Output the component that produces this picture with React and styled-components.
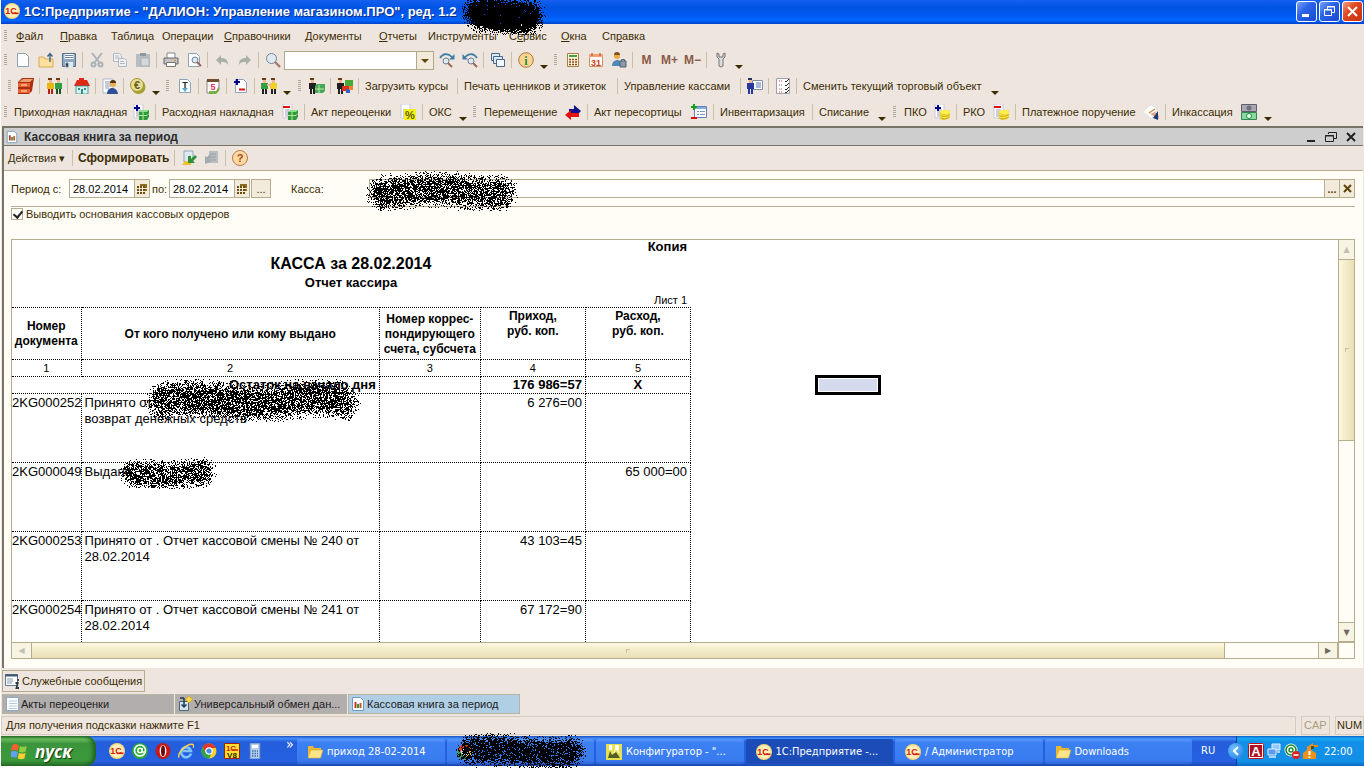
import { Fragment } from "react";
import styled, { createGlobalStyle, css } from "styled-components";

const ui = `"Liberation Sans", Arial, sans-serif`;
const shell = `"DejaVu Sans Condensed", "Noto Sans", sans-serif`;

const GlobalStyle = createGlobalStyle`
  * {
    box-sizing: border-box;
  }
  body {
    margin: 0;
    background: #fff;
    font-family: ${ui};
    font-size: 11px;
    color: #3c2c04;
  }
  button, input, select {
    font: inherit;
    color: inherit;
    margin: 0;
    padding: 0;
    border: 0;
    border-radius: 0;
    background: none;
  }
  svg {
    display: block;
    flex: none;
  }
`;

/* ---------- icons ---------- */

const Letter = ({ x = 8, y, size, fill, children, font = "Liberation Sans" }) => (
  <text x={x} y={y} fontSize={size} fill={fill} fontFamily={font} fontWeight="bold" textAnchor="middle">
    {children}
  </text>
);

const page = <path d="M2.5 1.5h8l3 3v10h-11z" fill="#fff" stroke="#8fa3b8" />;
const redPage = (
  <>
    <path d="M1 0h9v14H1z" fill="#fff" stroke="#c8c8d8" />
    <path d="M3 6h5M3 8h5M3 10h5M3 12h5" stroke="#9aa0b8" />
  </>
);
const plus = <path d="M4 1v6M1 4h6" stroke="#00008c" strokeWidth="2" />;
const minus = <path d="M1 3h7" stroke="#e01010" strokeWidth="2" />;
const box = (
  <>
    <path d="M6 8l3-2h7v7l-2 3H6z" fill="#2e9a3c" />
    <path d="M6 8l3-2h7l-2 2z" fill="#8ce08c" />
    <path d="M10 8v8M6 11.5h8l2-2" stroke="#b9e8a0" fill="none" />
  </>
);
const coins = (
  <>
    <path d="M6 9c0-2 5-4 10-2v6c-1 3-9 4-10 1z" fill="#d8b800" />
    <path d="M6 10c3 2 7 1 10-1M6 12.500c3 2 7 1 10-1" stroke="#fff27a" fill="none" />
    <ellipse cx="11" cy="8" rx="5" ry="2" fill="#fff04a" />
  </>
);
const person = (x, shirt, legs = "#222", hair = "#6a3a10") => (
  <g transform={`translate(${x} 0)`}>
    <path d="M2 1h3v4H2z" fill="#f0b890" />
    <path d="M1 0h4v2H1z" fill={hair} />
    <path d="M0 5h7v6H0z" fill={shirt} />
    <path d="M1 11h2v5H1zM4 11h2v5H4z" fill={legs} />
  </g>
);
const lens = (x, y) => (
  <>
    <circle cx={x} cy={y} r="3" fill="#dfe9f2" stroke="#6d8095" />
    <path d={`M${x + 2} ${y + 2}l4 4`} stroke="#9a6858" strokeWidth="2" />
  </>
);

const icons = {
  oneC: (
    <>
      <circle cx="8" cy="8" r="8" fill="#f8d878" />
      <circle cx="8" cy="8" r="6.800" fill="#fff0b8" />
      <Letter x={7} y={11} size={9} fill="#d8200c">
        1С
      </Letter>
      <path d="M8 10.300h6.500" stroke="#d8200c" strokeWidth="1.600" />
    </>
  ),
  blank: page,
  open: (
    <>
      <path d="M1 5h5l1 2h8v8H1z" fill="#fbe0a0" stroke="#d9a850" />
      <path d="M12 10V2M9.500 4.500 12 1.500l2.500 3" fill="none" stroke="#3f6486" strokeWidth="1.400" />
    </>
  ),
  save: (
    <>
      <path d="M1.500 1.500h13v13h-13z" fill="#8faabf" stroke="#55718c" />
      <path d="M3.500 2h9v5h-9z" fill="#fff" />
      <path d="M4 10h8v5H4z" fill="#dfe8ef" />
      <path d="M5 11h2v4H5zM4 3.500h8M4 5.500h8" stroke="#6c88a2" />
    </>
  ),
  cut: (
    <g fill="none" stroke="#a9b2b8" strokeWidth="2">
      <path d="M3 1l7 9M13 1L6 10" />
      <circle cx="4.500" cy="12.500" r="2" />
      <circle cx="11.500" cy="12.500" r="2" />
    </g>
  ),
  copy: (
    <g fill="#eef0f2" stroke="#b0b9c2">
      <path d="M1.500 1.500h6l2 2v6h-8z" />
      <path d="M6.500 6.500h6l2 2v6h-8z" />
      <path d="M3 4h4M3 6h4M8 9.500h4M8 11.500h5" />
    </g>
  ),
  paste: (
    <>
      <path d="M1 2h14v13H1z" fill="#b5bcc2" />
      <path d="M5 1h6v3H5z" fill="#8d979f" />
      <path d="M6 6h8v8H6z" fill="#d4d8db" stroke="#aab2b8" />
    </>
  ),
  print: (
    <>
      <path d="M4 1h8v6H4z" fill="#fff" stroke="#888" />
      <path d="M1 6h14v6H1z" fill="#c4c4c4" stroke="#666" />
      <path d="M3.500 10.500h9v4h-9z" fill="#fff" stroke="#777" />
      <path d="M11 8.500h2" stroke="#e08020" />
    </>
  ),
  preview: (
    <>
      {page}
      {lens(9, 8)}
    </>
  ),
  undo: <path d="M2 8l5-5v3c5 0 7 2 7 7-2-3-3-3-7-3v3z" fill="#a9b0a6" />,
  redo: <path d="M14 8L9 3v3c-5 0-7 2-7 7 2-3 3-3 7-3v3z" fill="#a9b0a6" />,
  find: (
    <>
      <circle cx="6.500" cy="6.500" r="5" fill="#dfe9f2" stroke="#71859b" />
      <path d="M10 10l5 5" stroke="#a8786a" strokeWidth="2.400" />
    </>
  ),
  findNext: (
    <>
      <path d="M1 6c3-5 8-5 12-1" fill="none" stroke="#3b7ea8" strokeWidth="1.600" />
      <path d="M15.500 2v5.500H10z" fill="#3b7ea8" />
      {lens(7, 9)}
    </>
  ),
  findPrev: (
    <>
      <path d="M15 6C12 1 7 1 3 5" fill="none" stroke="#3b7ea8" strokeWidth="1.600" />
      <path d="M.5 2v5.500H6z" fill="#3b7ea8" />
      {lens(9, 9)}
    </>
  ),
  windows: (
    <g fill="#dce8f4" stroke="#49698a">
      <path d="M1.500 1.500h8v7h-8z" />
      <path d="M3.500 4.500h9v7h-9z" />
      <path d="M6.500 7.500h8v7h-8z" fill="#f4f8fc" />
    </g>
  ),
  info: (
    <>
      <circle cx="8" cy="8" r="7.300" fill="#fbd692" stroke="#a8783c" />
      <Letter y={12.5} size={12} fill="#2c8a3c" font="Liberation Serif">
        i
      </Letter>
    </>
  ),
  calc: (
    <>
      <path d="M2.500 1.500h11v13h-11z" fill="#fff6d8" stroke="#a5824a" />
      <path d="M4 4h8" stroke="#45a045" strokeWidth="2" />
      <path d="M4 7.500h8M4 10h8M4 12.500h8" stroke="#8a4820" strokeWidth="1.500" strokeDasharray="2 1" />
    </>
  ),
  calendar: (
    <>
      <path d="M1.500 2.500h13v12h-13z" fill="#fff" stroke="#d29460" />
      <path d="M1 2h14v3H1z" fill="#f4a070" />
      <path d="M4 1v3M12 1v3" stroke="#a85020" />
      <Letter y={13.5} size={9} fill="#d04020">
        31
      </Letter>
    </>
  ),
  user: (
    <>
      <circle cx="6" cy="4" r="3" fill="#f0a840" />
      <path d="M3 3a3 3 0 0 1 6 0z" fill="#805020" />
      <path d="M1 14c0-7 9-8 10-2v2z" fill="#4f8ab8" />
      <path d="M9 9h6v6H9z" fill="#8d9cac" stroke="#4f5f70" />
      <path d="M10.500 9V7.500h3V9" fill="none" stroke="#4f5f70" />
    </>
  ),
  wrench: <path d="M4 1v4l2 2v7q2 2 4 0V7l2-2V1l-2 1v3H6V2z" fill="#dcdcdc" stroke="#747474" />,
  drawers: (
    <>
      <path d="M0 4l4-4h12l-2 13-3 3H0z" fill="#a83010" />
      <path d="M1 4l4-3h10l-3 3z" fill="#f0a070" />
      <path d="M0 5h12v4H0zM0 11h12v4H0z" fill="#e86030" />
      <path d="M3 7h6M3 13h6" stroke="#fff0c0" />
    </>
  ),
  people: (
    <>
      {person(1, "#e8b810", "#b82010")}
      {person(9, "#30a040", "#205028")}
    </>
  ),
  house: (
    <>
      <path d="M5 0h5v3H5z" fill="#e02818" />
      <path d="M0 8l3-6h10l3 6z" fill="#e02818" />
      <path d="M2 8h12v8H2z" fill="#d8f0f0" stroke="#309080" strokeWidth=".8" />
      <path d="M4 10h2v2H4zM10 10h2v2h-2zM7 11h2v5H7z" fill="#309080" />
    </>
  ),
  clerk: (
    <>
      <path d="M1 1h10v14H1z" fill="#fff" stroke="#b0b8c8" />
      <path d="M3 4h6M3 6h6M3 8h6M3 10h4" stroke="#8898b0" />
      <circle cx="11" cy="6" r="3" fill="#e8b050" />
      <path d="M8 5a3 3 0 0 1 6 0z" fill="#583010" />
      <path d="M5 16c0-8 10-8 11 0z" fill="#2f4f98" />
    </>
  ),
  euro: (
    <>
      <circle cx="8.500" cy="9" r="7" fill="#a8a030" />
      <circle cx="7" cy="7" r="6.500" fill="#e4dc98" stroke="#a09830" />
      <Letter x={7} y={11} size={11} fill="#686010">
        €
      </Letter>
    </>
  ),
  pageT: (
    <>
      {page}
      <path d="M5 10h6l-3 4z" fill="#5aa8d0" />
      <Letter y={10} size={9} fill="#222">
        T
      </Letter>
    </>
  ),
  page5: (
    <>
      <path d="M2 2h12v10l-3 3H2z" fill="#fff" stroke="#888" />
      <path d="M2 1h12v3H2z" fill="#705030" />
      <path d="M4 13h7l3-5v5l-3 3H4z" fill="#78b048" />
      <Letter y={12} size={9} fill="#e03060">
        5
      </Letter>
    </>
  ),
  plusMinus: (
    <>
      {page}
      {plus}
      <path d="M6 11.500h6" stroke="#e01010" strokeWidth="2" />
    </>
  ),
  handshake: (
    <>
      {person(0, "#30a040")}
      {person(9, "#f0d020")}
      <path d="M6 7h5" stroke="#f0b890" strokeWidth="2" />
    </>
  ),
  manBox: (
    <>
      {person(0, "#202020")}
      <path d="M6 8l2-2h8v7l-2 2H6z" fill="#48a858" />
      <path d="M10 7v8M6 11h9" stroke="#b8e8a0" />
    </>
  ),
  manCubes: (
    <>
      {person(0, "#202020")}
      <path d="M8 2h8v7H8z" fill="#48a838" />
      <path d="M5 8h7v5H5z" fill="#e03020" />
      <path d="M9 11h4v4H9z" fill="#3060d0" />
      <path d="M12 8h4v4h-4z" fill="#f08030" />
    </>
  ),
  idCard: (
    <>
      <path d="M5.500 2.500h10v9h-10z" fill="#fff" stroke="#8090a8" />
      <path d="M9 5h5M9 7h5M9 9h5" stroke="#5878b0" />
      {person(0, "#2838a0", "#2838a0", "#283060")}
    </>
  ),
  checklist: (
    <>
      <path d="M1.500.500h13v15h-13z" fill="#fff" stroke="#a0a0a8" />
      <path d="M4 3h4M4 7h4M4 11h4M4 14h4" stroke="#d04040" strokeDasharray="1 1" />
      <path d="M10 3l1 1 3-3M10 7l1 1 3-3M10 11l1 1 3-3M10 14l1 1 3-3" fill="none" stroke="#222" />
    </>
  ),
  boxPlus: (
    <>
      {redPage}
      {plus}
      {box}
    </>
  ),
  boxMinus: (
    <>
      {redPage}
      {minus}
      {box}
    </>
  ),
  percent: (
    <>
      {redPage}
      <path d="M4 5h12v11H4z" fill="#f4f020" />
      <Letter x={10} y={14.5} size={11} fill="#606000">
        %
      </Letter>
    </>
  ),
  arrows: (
    <>
      <path d="M4 5h5V1l7 6-4 4V9H4z" fill="#10108c" />
      <path d="M0 11l6-5v3h8v4H6v3z" fill="#e81010" />
    </>
  ),
  resort: (
    <>
      <path d="M3.500 2.500h12v11h-12z" fill="#fff" stroke="#6080b8" />
      <path d="M4 4h11" stroke="#88a8e0" strokeWidth="2" />
      <path d="M6 7.500h2M9 7.500h5M6 10.500h2M9 10.500h5" stroke="#7898c0" />
      <path d="M3 0v6M0 3h6" stroke="#18a018" strokeWidth="2" />
      <path d="M0 14h6" stroke="#e01010" strokeWidth="2" />
    </>
  ),
  coinsPlus: (
    <>
      {redPage}
      {plus}
      {coins}
    </>
  ),
  coinsMinus: (
    <>
      {redPage}
      {minus}
      {coins}
    </>
  ),
  sign: (
    <>
      <path d="M0 8l7-7 7 3-5 11z" fill="#fff" stroke="#d8dce0" strokeWidth=".8" />
      <path d="M6 9l6-4" stroke="#d09040" strokeWidth="1.500" />
      <path d="M7 10l5-2 4 4v3z" fill="#e0a888" />
      <path d="M10 14l5-7v9z" fill="#203878" />
    </>
  ),
  cash: (
    <>
      <path d="M.5.500h15v7H.5z" fill="#a8a8b0" stroke="#60606c" />
      <circle cx="8" cy="4" r="2.500" fill="#70707c" />
      <path d="M.5 8.500h15v7H.5z" fill="#88d8a0" stroke="#308850" />
      <circle cx="8" cy="12" r="2.500" fill="#e0ffe8" stroke="#308850" />
    </>
  ),
  report: (
    <>
      <path d="M2.500 1.500h8l3 3v10h-11z" fill="#fff" stroke="#6f9ac0" />
      <path d="M5.500 6v6" stroke="#d03020" strokeWidth="2" />
      <path d="M8 8v4" stroke="#30a030" strokeWidth="2" />
      <path d="M10.500 7v5" stroke="#c05030" strokeWidth="2" />
    </>
  ),
  loadSet: (
    <>
      <path d="M3 1h9v11H3z" fill="#dfe9f2" stroke="#8fa8bc" />
      <path d="M1 15l3-4h6v4z" fill="#f0c030" />
      <path d="M14 5l-4 4V6H7v7h7l-2-2 4-4z" fill="#2f9038" />
    </>
  ),
  saveSet: (
    <>
      <path d="M5 1h9v12H5z" fill="#b9bec3" />
      <path d="M6 4h6M6 7h6M6 10h6" stroke="#989ea4" />
      <path d="M1 14V6l2 1 3-3 1 4-2 1 2 3z" fill="#a3aab0" />
    </>
  ),
  help: (
    <>
      <circle cx="8" cy="8" r="7.500" fill="#ffd9a0" stroke="#b87850" />
      <Letter y={12} size={11} fill="#a04820">
        ?
      </Letter>
    </>
  ),
  messages: (
    <>
      <path d="M.5 1.500h12v11H.5z" fill="#fff" stroke="#607890" />
      <path d="M0 2.500h13" stroke="#405870" strokeWidth="2" />
      <path d="M2 6h6M2 8h6M2 10h5" stroke="#8098b0" />
      <path d="M13 6v2M10.500 10h2.200l-1.200 5h2.500" fill="none" stroke="#303840" strokeWidth="1.800" />
    </>
  ),
  journal: (
    <>
      <path d="M2.500 1.500h12v13h-12z" fill="#fff" stroke="#8aa8c8" />
      <path d="M5 5h8M5 7.500h8M5 10h8M5 12.500h8" stroke="#b8c8d8" />
    </>
  ),
  exchange: (
    <>
      <path d="M2.500 5.500h9v9h-9z" fill="#d8e4ec" stroke="#48647c" />
      <path d="M7 2v9M4.500 8.500 7 11l2.500-2.500M3 2h4" fill="none" stroke="#203850" strokeWidth="1.500" />
      <path d="M12 0l3.500 3.500L12 7 8.500 3.500z" fill="#ffd840" stroke="#c89818" strokeWidth=".6" />
    </>
  ),
  folder: (
    <>
      <path d="M1 2h5l1 2h7v10H1z" fill="#e8b830" />
      <path d="M4 6h12l-2.500 8H1z" fill="#ffe58a" stroke="#d8a828" strokeWidth=".6" />
    </>
  ),
  flag: (
    <>
      <path d="M1 3c2-2 4-1 6 0L6 8C4 7 3 6.500 0 8z" fill="#f06030" />
      <path d="M8 3.500c2 1 4 1 6 0l-1 5c-2 1-4 1-6 0z" fill="#8ad040" />
      <path d="M0 9c2-1.500 4-1 6 0l-1 5c-2-1-4-1-6 0z" fill="#60a0f8" />
      <path d="M7 9.500c2 1 4 1 6 0l-1 5c-2 1-4 1-6 0z" fill="#ffd030" />
    </>
  ),
  agent: (
    <>
      <circle cx="8" cy="8" r="8" fill="#28a838" />
      <circle cx="8" cy="7.500" r="5.500" fill="none" stroke="#fff" strokeWidth="1.600" />
      <circle cx="8" cy="7.500" r="2.200" fill="none" stroke="#fff" strokeWidth="1.600" />
      <path d="M10.200 5v3.500q1 1.500 2.500 0" fill="none" stroke="#fff" strokeWidth="1.400" />
    </>
  ),
  opera: (
    <>
      <ellipse cx="8" cy="8" rx="7.500" ry="8" fill="#c81818" />
      <ellipse cx="8" cy="8" rx="3.400" ry="6" fill="#fff" />
      <ellipse cx="8" cy="8" rx="2" ry="5.400" fill="#700808" />
    </>
  ),
  ie: (
    <>
      <path d="M13 10.500A5 5 0 1 1 13 8H5" fill="none" stroke="#7cc4ff" strokeWidth="2.600" />
      <path d="M1 14.500C-1 10 9 0 15 1.500c1.500 1 0 3 0 3" fill="none" stroke="#ffd24a" strokeWidth="1.400" />
    </>
  ),
  chrome: (
    <>
      <circle cx="8" cy="8" r="7.500" fill="#f8d030" />
      <path d="M1.500 4.250A7.500 7.500 0 0 1 15 5H8L5 9.500z" fill="#e03828" />
      <path d="M1.500 4.250A7.500 7.500 0 0 0 8 15.500l3-6H5z" fill="#30a048" />
      <circle cx="8" cy="8" r="3.200" fill="#4888e8" stroke="#fff" strokeWidth="1.200" />
    </>
  ),
  v8: (
    <>
      <path d="M.5.500h15v15H.5z" fill="#f8e030" stroke="#a02010" />
      <path d="M8 7h6" stroke="#d82010" strokeWidth="1.500" />
      <Letter x={7} y={8} size={8} fill="#d82010">
        1С
      </Letter>
      <Letter y={15} size={8} fill="#302800">
        V8
      </Letter>
    </>
  ),
  pda: (
    <>
      <path d="M3 0h10v16H3z" fill="#b8d0f0" stroke="#5878b8" />
      <path d="M5 2h6v3H5z" fill="#fff" />
      <path d="M5 8h6M5 10.500h6M5 13h6" stroke="#4068a8" strokeWidth="1.300" strokeDasharray="1.500 1" />
    </>
  ),
  config: (
    <>
      <path d="M0 0h16v16H0z" fill="#e8e050" />
      <path d="M3 1h3v5H3zM9 1h4v5H9z" fill="#fff" />
      <path d="M2 14l2-7 2 4 4-3 4 6z" fill="#506028" />
      <path d="M8 9l2-5 3 5" fill="none" stroke="#fff" />
    </>
  ),
  avira: (
    <>
      <rect x=".5" y=".5" width="15" height="15" rx="1" fill="#fff" stroke="#c01020" />
      <path d="M2 2h12v12H2z" fill="#b01020" />
      <Letter y={13} size={13} fill="#fff">
        A
      </Letter>
    </>
  ),
  network: (
    <>
      <path d="M6 1h8v6H6z" fill="#90c8ff" stroke="#e0f0ff" />
      <path d="M2 6h8v6H2z" fill="#5898f0" stroke="#e0f0ff" />
      <path d="M3 14h7M11 9h3" stroke="#d8e8f8" strokeWidth="1.500" />
    </>
  ),
  agentOff: (
    <>
      <circle cx="7" cy="7" r="6.500" fill="#fff" />
      <circle cx="7" cy="7" r="5" fill="none" stroke="#188828" strokeWidth="1.600" />
      <circle cx="7" cy="7" r="2" fill="none" stroke="#188828" strokeWidth="1.400" />
      <circle cx="12" cy="12" r="4" fill="#e02020" />
      <path d="M9.500 12h5" stroke="#fff" strokeWidth="1.600" />
    </>
  ),
  guard: (
    <>
      <path d="M5 4l6-4v2h5v2H9v3l5 3v6H1v-6l4-3z" fill="#f09018" />
      <path d="M9 3h3v3H9z" fill="#405020" />
      <path d="M7.500 8v4M7.500 13.500V15" stroke="#fff" strokeWidth="2" />
    </>
  ),
};

const Icon = ({ name, size = 16 }) => (
  <svg width={size} height={size} viewBox="0 0 16 16" aria-hidden="true">
    {icons[name]}
  </svg>
);

/* ---------- ink spray over the private fields ---------- */

const Spray = styled.svg`
  position: absolute;
  left: ${(p) => p.$x}px;
  top: ${(p) => p.$y}px;
  pointer-events: none;
  z-index: 2;
`;

function Ink({ x, y, w, h, max = 0.72, gain = 1.25, seed = 7 }) {
  let s = seed;
  const rnd = () => {
    s = (s * 16807) % 2147483647;
    return s / 2147483647;
  };
  for (let i = 0; i < 20; i++) rnd();
  let d = "";
  for (let py = 0; py < h; py++) {
    for (let px = 0; px < w; px++) {
      const wave = Math.sin((px + seed * 9) / 19) * 0.12;
      const dy = Math.abs((py - h / 2) / (h / 2) + wave);
      const dx = Math.min(px, w - px) / (h / 2);
      const edge = dx < 1 ? 1 - dx : 0;
      const r = Math.sqrt(dy * dy + edge * edge);
      if (rnd() < Math.min(max, (1 - r) * gain)) d += `M${px} ${py}h1v1h-1z`;
    }
  }
  return (
    <Spray $x={x} $y={y} width={w} height={h} shapeRendering="crispEdges" aria-hidden="true">
      <path d={d} fill="#000" />
    </Spray>
  );
}

/* ---------- application frame ---------- */

const Desktop = styled.div`
  display: flex;
  flex-direction: column;
  height: 100vh;
  padding: 0 0 2px 1px;
  overflow: hidden;
`;

const Frame = styled.div`
  flex: 1;
  min-height: 0;
  display: flex;
  flex-direction: column;
  background: #eee6de;
`;

const TitleBar = styled.header`
  position: relative;
  display: flex;
  align-items: center;
  gap: 4px;
  height: 24px;
  flex: none;
  padding: 0 1px 2px 3px;
  background: linear-gradient(#1660f0, #0054e3 30%, #0058f0 60%, #0066ff 85%, #0040c8);
  color: #fff;
  h1 {
    flex: 1;
    margin: 0;
    font: bold 13px ${ui};
    text-shadow: 1px 1px #0a2a80;
    white-space: pre;
  }
`;

const CaptionButton = styled.button`
  width: 21px;
  height: 21px;
  margin-left: -2px;
  border: 1px solid #fff;
  border-radius: 3px;
  background: ${(p) => (p.$close ? "linear-gradient(135deg, #f0a080, #e04820 40%, #c83010)" : "linear-gradient(135deg, #7aa4f8, #2c64e8 40%, #1848d0)")};
  svg {
    margin: 0 auto;
  }
`;

const Bar = styled.nav`
  display: flex;
  align-items: center;
  height: ${(p) => p.$h || 26}px;
  flex: none;
  padding-left: ${(p) => p.$pad || 3}px;
  white-space: nowrap;
`;

const Grip = styled.i`
  width: 3px;
  height: 12px;
  margin: 0 ${(p) => p.$after || 4}px 0 ${(p) => p.$before || 0}px;
  background: repeating-linear-gradient(#b0a898 0 1px, transparent 1px 2px);
`;

const MenuItem = styled.button`
  min-width: ${(p) => p.$w}px;
  text-align: left;
`;

const Sep = styled.i`
  width: 1px;
  height: 16px;
  margin: 0 2px;
  background: #c8c0a8;
`;

const IconButton = styled.button`
  display: flex;
  align-items: center;
  justify-content: center;
  width: 23px;
  height: 22px;
  font-weight: bold;
  font-size: 12px;
  color: #8a5a48;
`;

const TextButton = styled.button`
  display: flex;
  align-items: center;
  justify-content: space-between;
  min-width: ${(p) => p.$w}px;
  height: 22px;
  padding: 0 4px;
`;

const More = styled.button`
  width: 11px;
  height: 22px;
  padding: 14px 1px 0 3px;
  &::after {
    content: "";
    display: block;
    border: 4px solid transparent;
    border-top-color: #3c2c04;
    border-bottom: 0;
  }
`;

const SearchBox = styled.span`
  position: relative;
  display: flex;
  width: 150px;
  height: 19px;
  margin-right: 1px;
  border: 1px solid #b0a888;
  background: #fff;
  select {
    flex: 1;
    appearance: none;
  }
  &::after {
    content: "";
    position: absolute;
    right: 4px;
    top: 7px;
    border: 4px solid transparent;
    border-top-color: #5c4a10;
    border-bottom: 0;
  }
  &::before {
    content: "";
    position: absolute;
    right: 0;
    width: 16px;
    height: 17px;
    border-left: 1px solid #b0a888;
    background: #f2eada;
  }
`;

const menu = [
  ["Файл", 44, 0],
  ["Правка", 51, 0],
  ["Таблица", 51],
  ["Операции", 62],
  ["Справочники", 81, 0],
  ["Документы", 74, 0],
  ["Отчеты", 49, 0],
  ["Инструменты", 81],
  ["Сервис", 52, 1],
  ["Окна", 41, 0],
  ["Справка", 50, 2],
];

const toolsMain = "grip:2 blank open save | cut copy paste | print preview | undo redo | find search findNext findPrev | windows | info more grip:6 calc calendar user | M M+ M− | wrench more";

const Hot = ({ text, at }) =>
  at === undefined ? (
    text
  ) : (
    <>
      {text.slice(0, at)}
      <u>{text[at]}</u>
      {text.slice(at + 1)}
    </>
  );

function Tool({ id }) {
  if (id === "|") return <Sep />;
  if (id === "more") return <More aria-label="Ещё" />;
  if (id.startsWith("grip")) return <Grip $before={+id.split(":")[1]} />;
  if (id === "search")
    return (
      <SearchBox>
        <select aria-label="Поиск" />
      </SearchBox>
    );
  return <IconButton aria-label={id}>{icons[id] ? <Icon name={id} /> : id}</IconButton>;
}

const Tools = ({ list }) => list.split(" ").map((id, i) => <Tool key={i} id={id} />);

/* ---------- report window ---------- */

const ReportWindow = styled.main`
  flex: 1;
  min-height: 0;
  display: flex;
  flex-direction: column;
  margin: 1px 1px 0 1px;
  border-top: 2px solid #787468;
  border-left: 2px solid #787468;
  background: #fffdf5;
`;

const ReportTitle = styled.div`
  display: flex;
  align-items: center;
  height: 18px;
  flex: none;
  padding: 0 3px 0 1px;
  gap: 5px;
  background: #cecece;
  border-bottom: 1px solid #787468;
  h2 {
    flex: 1;
    margin: 0;
    font-size: 12px;
    color: #2c2c2c;
  }
  button {
    width: 15px;
  }
`;

const Commands = styled.div`
  display: flex;
  align-items: center;
  height: 25px;
  flex: none;
  padding-left: 1px;
  background: #eee6de;
  border-bottom: 1px solid #b5ad8e;
`;

const Command = styled.button`
  height: 20px;
  min-width: ${(p) => p.$w}px;
  padding: 0 3px;
  text-align: left;
  white-space: nowrap;
  font-weight: ${(p) => (p.$bold ? "bold" : "normal")};
  font-size: ${(p) => (p.$bold ? 12 : 11)}px;
`;

const Filters = styled.form`
  display: flex;
  align-items: center;
  height: 36px;
  flex: none;
  margin: 0 8px 0 7px;
  border-bottom: 1px solid #b5ad8e;
  label {
    min-width: 58px;
  }
  label + span + label {
    min-width: 19px;
    padding-left: 2px;
  }
`;

const field = css`
  display: flex;
  height: 19px;
  border: 1px solid #b5ad8e;
  background: #fff;
  color: #000;
`;

const DateBox = styled.span`
  ${field}
  width: 81px;
  input {
    flex: 1;
    min-width: 0;
    padding-left: 3px;
  }
`;

const FieldButton = styled.button`
  width: 15px;
  flex: none;
  border-left: 1px solid #b5ad8e;
  background: #f2eada;
  color: #5c4408;
  font-weight: bold;
  svg {
    margin: 0 auto;
  }
`;

const PeriodButton = styled.button`
  width: 20px;
  height: 19px;
  margin: 0 20px 0 1px;
  border: 1px solid #b5ad8e;
  background: #f2eada;
`;

const CashDesk = styled.span`
  position: relative;
  ${field}
  flex: 1;
  margin-left: 20px;
  input {
    flex: 1;
  }
`;

const CheckRow = styled.label`
  display: flex;
  align-items: center;
  gap: 3px;
  height: 14px;
  flex: none;
  margin: 0 0 18px 7px;
  input {
    appearance: none;
    width: 12px;
    height: 12px;
    border: 1px solid #b5ad8e;
    background: #fff;
  }
  input:checked::after {
    content: "";
    display: block;
    width: 4px;
    height: 7px;
    margin: 0 0 0 3px;
    border: solid #222;
    border-width: 0 2px 2px 0;
    transform: rotate(40deg);
  }
`;

const SheetFrame = styled.div`
  flex: 1;
  min-height: 0;
  display: grid;
  grid-template: minmax(0, 1fr) 16px / minmax(0, 1fr) 16px;
  margin: 0 8px 9px 7px;
  border: 1px solid #b5ad8e;
`;

const Sheet = styled.section`
  position: relative;
  overflow: hidden;
  background: #fff;
  color: #000;
`;

const Selected = styled.div`
  position: absolute;
  left: 803px;
  top: 135px;
  width: 66px;
  height: 20px;
  border: 3px solid #000;
  background: #d5daee;
  box-shadow: inset 0 0 0 1px #fff;
`;

const Heading = styled.div`
  width: 678px;
  text-align: center;
  font-weight: bold;
  p {
    margin: 0;
    padding-right: 3px;
    height: 14px;
    line-height: 14px;
    text-align: right;
    font-size: 13px;
  }
  p + h3 {
    margin: 0;
    font-size: 16px;
    line-height: 20px;
  }
  h4 {
    margin: 0;
    font-size: 13px;
    line-height: 18px;
  }
  h4 + p {
    font-weight: normal;
    font-size: 11px;
    line-height: 16px;
    height: 15px;
  }
`;

const CashTable = styled.table`
  width: 679px;
  table-layout: fixed;
  border-collapse: collapse;
  font-size: 13px;
  line-height: 16px;
  th,
  td {
    position: relative;
    padding: 0 3px;
    border: 1px dotted #000;
    vertical-align: top;
  }
  th:first-child,
  td:first-child {
    border-left: 0;
  }
  thead th {
    height: 52px;
    padding: 1px 1px 0;
    font-size: 12px;
    line-height: 15px;
    vertical-align: middle;
  }
  thead th.top {
    vertical-align: top;
  }
`;

const NumberRow = styled.tr`
  td {
    height: 17px;
    font-size: 11px;
    text-align: center;
  }
`;

const OpeningRow = styled.tr`
  font-weight: bold;
  text-align: right;
  td {
    height: 17px;
  }
  td:last-child {
    text-align: center;
  }
`;

const EntryRow = styled.tr`
  td {
    height: 69px;
    padding-top: 1px;
  }
  td:first-child {
    padding: 1px 0 0;
    text-align: right;
  }
  td:nth-child(n + 4) {
    text-align: right;
  }
`;

const Scroll = styled.div`
  display: flex;
  flex-direction: ${(p) => (p.$vertical ? "column" : "row")};
  border: 0 solid #b5ad8e;
  border-width: ${(p) => (p.$vertical ? "0 0 0 1px" : "1px 0 0 0")};
  button {
    flex: 0 0 20px;
    background: #f8f4e4;
    border: 0 solid #b5ad8e;
    border-width: ${(p) => (p.$vertical ? "1px 0" : "0 1px")};
    font: 8px "DejaVu Sans", sans-serif;
    color: #6a6a60;
  }
  button:first-child {
    color: #c0c0b0;
    border-width: ${(p) => (p.$vertical ? "0 0 1px" : "0 1px 0 0")};
  }
`;

const Thumb = styled.div`
  flex: 0 0 ${(p) => p.$size};
  display: flex;
  align-items: center;
  justify-content: center;
  border: 0 solid #b5ad8e;
  border-width: ${(p) => (p.$vertical ? "0 0 1px" : "0 1px 0 0")};
  background: linear-gradient(${(p) => (p.$vertical ? "to right" : "to bottom")}, #fcf8e0, #f2ebc8 50%, #e8dfb4);
  &::after {
    content: "";
    width: 3px;
    height: 3px;
    border: solid #c8c0a0;
    border-width: 1px 0 0 1px;
  }
`;

const Track = styled.div`
  flex: 1;
`;

const Corner = styled.div`
  border: solid #b5ad8e;
  border-width: 1px 0 0 1px;
`;

const rows = [
  { no: "2KG000252", who: ["Принято от", "возврат денежных средств"], income: "6 276=00", ink: { x: 61, y: -15, w: 218, h: 43, seed: 11 } },
  { no: "2KG000049", who: ["Выдано"], outcome: "65 000=00", ink: { x: 36, y: -6, w: 99, h: 32, seed: 5 } },
  { no: "2KG000253", who: ["Принято от . Отчет кассовой смены № 240 от", "28.02.2014"], income: "43 103=45" },
  { no: "2KG000254", who: ["Принято от . Отчет кассовой смены № 241 от", "28.02.2014"], income: "67 172=90" },
];

const Lines = ({ of }) =>
  of.map((line, i) => (
    <Fragment key={i}>
      {i > 0 && <br />}
      {line}
    </Fragment>
  ));

function CashBook() {
  return (
    <CashTable>
      <colgroup>
        <col width="69" />
        <col width="298" />
        <col width="101" />
        <col width="105" />
        <col width="105" />
      </colgroup>
      <thead>
        <tr>
          <th>
            <Lines of={["Номер", "документа"]} />
          </th>
          <th>От кого получено или кому выдано</th>
          <th>
            <Lines of={["Номер коррес-", "пондирующего", "счета, субсчета"]} />
          </th>
          <th className="top">
            <Lines of={["Приход,", "руб. коп."]} />
          </th>
          <th className="top">
            <Lines of={["Расход,", "руб. коп."]} />
          </th>
        </tr>
      </thead>
      <tbody>
        <NumberRow>
          {[1, 2, 3, 4, 5].map((n) => (
            <td key={n}>{n}</td>
          ))}
        </NumberRow>
        <OpeningRow>
          <td colSpan={2}>Остаток на начало дня</td>
          <td />
          <td>176 986=57</td>
          <td>X</td>
        </OpeningRow>
        {rows.map((r) => (
          <EntryRow key={r.no}>
            <td>{r.no}</td>
            <td>
              <Lines of={r.who} />
              {r.ink && <Ink {...r.ink} />}
            </td>
            <td />
            <td>{r.income}</td>
            <td>{r.outcome}</td>
          </EntryRow>
        ))}
      </tbody>
    </CashTable>
  );
}

const GridGlyph = () => (
  <svg width="12" height="12" viewBox="0 0 12 12" aria-hidden="true">
    <path d="M4 1h7v8H4z" fill="#8a6c20" />
    <path d="M1 3h8v8H1z" fill="#6a4c08" />
    <path d="M1 5.500h10M1 8.500h10M3.500 3v8M6.500 3v8" stroke="#f2eada" />
  </svg>
);

/* ---------- bottom bars ---------- */

const MessagesButton = styled.button`
  display: flex;
  align-items: center;
  align-self: flex-start;
  gap: 1px;
  height: 22px;
  flex: none;
  margin: 2px 0 2px 1px;
  padding: 0 2px;
  min-width: 143px;
  border: 1px solid #b5ad8e;
`;

const WindowTabs = styled.div`
  display: flex;
  gap: 1px;
  flex: none;
  padding-left: 1px;
`;

const WindowTab = styled.button`
  display: flex;
  align-items: center;
  gap: 1px;
  width: 172px;
  height: 20px;
  padding: 0 1px;
  border: 1px solid #b8b4a4;
  background: ${(p) => (p.$active ? "#b0cfe4" : "#b2aeae")};
  color: #20201c;
  white-space: nowrap;
`;

const StatusBar = styled.footer`
  display: flex;
  gap: 5px;
  height: 19px;
  flex: none;
  margin: 2px 0 1px;
  line-height: 17px;
  span {
    border: 1px solid #d4ccbe;
    padding: 0 1px;
    width: 29px;
    white-space: nowrap;
  }
  span:first-child {
    flex: 1;
    padding-left: 4px;
  }
  span:nth-child(2) {
    padding-left: 2px;
    color: #a89c7c;
  }
`;

const Taskbar = styled.nav`
  position: relative;
  display: flex;
  align-items: stretch;
  height: 30px;
  flex: none;
  background: linear-gradient(#1f50c0, #3f8cf8 8%, #245edc 20%, #2460e0 85%, #1c48b0);
  color: #fff;
  font-family: ${shell};
`;

const Start = styled.button`
  display: flex;
  align-items: center;
  gap: 6px;
  width: 95px;
  padding-left: 10px;
  border-radius: 0 10px 10px 0;
  background: linear-gradient(#2c7a2c, #6cc060 10%, #3c943c 25%, #3a9a3a 80%, #2a702a);
  box-shadow: inset -3px 0 4px #1f6020;
  font: italic bold 17px "Open Sans", sans-serif;
  text-shadow: 1px 1px 1px #103810;
`;

const QuickLaunch = styled.div`
  display: flex;
  align-items: center;
  gap: 7px;
  width: 201px;
  padding-left: 13px;
  button:last-child {
    margin: 0 0 14px 16px;
    font-size: 14px;
  }
`;

const Tasks = styled.div`
  flex: 1;
  min-width: 0;
  display: flex;
  gap: 2px;
`;

const Task = styled.button`
  flex: 1;
  min-width: 0;
  display: flex;
  align-items: center;
  gap: 4px;
  margin: 3px 0 2px;
  padding-left: 10px;
  border-radius: 2px;
  background: ${(p) => (p.$active ? "#1c4cb8" : "linear-gradient(#5c98fc, #3c80f4 15%, #3a7cf0 85%, #2c64d8)")};
  white-space: nowrap;
`;

const Lang = styled.span`
  width: 44px;
  padding-left: 9px;
  line-height: 29px;
`;

const Tray = styled.div`
  display: flex;
  align-items: center;
  gap: 2px;
  width: 128px;
  background: linear-gradient(#0c60c8, #18a8f4 8%, #1290e8 20%, #1290e8 85%, #0c68c0);
  border-left: 1px solid #0c3c90;
  time {
    margin-left: 4px;
  }
`;

const TrayArrow = styled.button`
  width: 16px;
  height: 16px;
  margin-left: -9px;
  margin-right: 2px;
  border-radius: 50%;
  background: radial-gradient(circle at 35% 35%, #70c0ff, #1878e0);
  svg {
    margin: 0 auto;
  }
`;

const quick = ["oneC", "agent", "opera", "ie", "chrome", "v8", "pda"];
const tasks = [
  ["folder", "приход 28-02-2014"],
  ["chrome", ""],
  ["config", 'Конфигуратор - "...'],
  ["oneC", "1С:Предприятие -...", true],
  ["oneC", "/ Администратор"],
  ["folder", "Downloads"],
];

export default function App() {
  return (
    <Desktop>
      <GlobalStyle />
      <Frame>
        <TitleBar>
          <Icon name="oneC" />
          <h1>1С:Предприятие - "ДАЛИОН: Управление магазином.ПРО", ред. 1.2</h1>
          <Ink x={459} y={-6} w={86} h={41} max={0.99} gain={2.2} seed={3} />
          <CaptionButton aria-label="Свернуть">
            <svg width="15" height="15">
              <path d="M3 11.500h7" stroke="#fff" strokeWidth="3" />
            </svg>
          </CaptionButton>
          <CaptionButton aria-label="Восстановить">
            <svg width="15" height="15" fill="none" stroke="#fff">
              <path d="M5.500 5V2.500h7v6H10M2.500 5.500h7v6h-7zM2 6h8M5 3h8" />
            </svg>
          </CaptionButton>
          <CaptionButton $close aria-label="Закрыть">
            <svg width="15" height="15">
              <path d="M3 3l9 9M12 3l-9 9" stroke="#fff" strokeWidth="2" />
            </svg>
          </CaptionButton>
        </TitleBar>

        <Bar $h={23}>
          <Grip $after={9} />
          {menu.map(([text, w, at]) => (
            <MenuItem key={text} $w={w}>
              <Hot text={text} at={at} />
            </MenuItem>
          ))}
        </Bar>
        <Bar $pad={1}>
          <Tools list={toolsMain} />
        </Bar>
        <Bar $pad={7}>
          <Grip $after={3} />
          <Tools list="drawers | people | house | clerk | euro more grip:6 pageT | page5 | plusMinus | handshake more grip:7 manBox | manCubes |" />
          <TextButton $w={94}>Загрузить курсы</TextButton>
          <Sep />
          <TextButton $w={155}>Печать ценников и этикеток</TextButton>
          <Sep />
          <TextButton $w={118}>Управление кассами</TextButton>
          <Tools list="| idCard | checklist |" />
          <TextButton $w={189}>Сменить текущий торговый объект</TextButton>
          <More aria-label="Ещё" />
        </Bar>
        <Bar>
          <Grip $after={3} />
          <TextButton $w={143}>
            Приходная накладная <Icon name="boxPlus" />
          </TextButton>
          <Sep />
          <TextButton $w={144}>
            Расходная накладная <Icon name="boxMinus" />
          </TextButton>
          <Sep />
          <TextButton $w={113}>
            Акт переоценки <Icon name="percent" />
          </TextButton>
          <Sep />
          <TextButton $w={31}>ОКС</TextButton>
          <Tools list="more grip:6" />
          <TextButton $w={105}>
            Перемещение <Icon name="arrows" />
          </TextButton>
          <Sep />
          <TextButton $w={121}>
            Акт пересортицы <Icon name="resort" />
          </TextButton>
          <Sep />
          <TextButton $w={94}>Инвентаризация</TextButton>
          <Sep />
          <TextButton $w={60}>Списание</TextButton>
          <Tools list="more grip:7" />
          <TextButton $w={54}>
            ПКО <Icon name="coinsPlus" />
          </TextButton>
          <Sep />
          <TextButton $w={54}>
            РКО <Icon name="coinsMinus" />
          </TextButton>
          <Sep />
          <TextButton $w={145}>
            Платежное поручение <Icon name="sign" />
          </TextButton>
          <Sep />
          <TextButton $w={93}>
            Инкассация <Icon name="cash" />
          </TextButton>
          <More aria-label="Ещё" />
        </Bar>

        <ReportWindow>
          <ReportTitle>
            <Icon name="report" size={14} />
            <h2>Кассовая книга за период</h2>
            <button aria-label="Свернуть окно">
              <svg width="12" height="12">
                <path d="M2 10h8" stroke="#222" strokeWidth="2" />
              </svg>
            </button>
            <button aria-label="Восстановить окно">
              <svg width="12" height="12" fill="none" stroke="#222">
                <path d="M3.500 3V1.500h8v6H9M.5 4.500h8v6h-8zM0 5h9" />
              </svg>
            </button>
            <button aria-label="Закрыть окно">
              <svg width="12" height="12">
                <path d="M2 2l8 8M10 2l-8 8" stroke="#222" strokeWidth="2" />
              </svg>
            </button>
          </ReportTitle>
          <Commands>
            <Command $w={65}>Действия ▾</Command>
            <Sep />
            <Command $w={97} $bold>
              Сформировать
            </Command>
            <Tools list="| loadSet saveSet | help" />
          </Commands>
          <Filters>
            <label htmlFor="from">Период с:</label>
            <DateBox>
              <input id="from" defaultValue="28.02.2014" />
              <FieldButton type="button" aria-label="Выбрать начало">
                <GridGlyph />
              </FieldButton>
            </DateBox>
            <label htmlFor="to">по:</label>
            <DateBox>
              <input id="to" defaultValue="28.02.2014" />
              <FieldButton type="button" aria-label="Выбрать конец">
                <GridGlyph />
              </FieldButton>
            </DateBox>
            <PeriodButton type="button">...</PeriodButton>
            <label htmlFor="desk">Касса:</label>
            <CashDesk>
              <input id="desk" />
              <Ink x={-6} y={-9} w={155} h={40} seed={9} />
              <FieldButton type="button">...</FieldButton>
              <FieldButton type="button" aria-label="Очистить">
                <svg width="9" height="9">
                  <path d="M1 1l7 7M8 1L1 8" stroke="#5c4408" strokeWidth="2" />
                </svg>
              </FieldButton>
            </CashDesk>
          </Filters>
          <CheckRow>
            <input type="checkbox" defaultChecked />
            Выводить основания кассовых ордеров
          </CheckRow>

          <SheetFrame>
            <Sheet>
              <Heading>
                <p>Копия</p>
                <h3>КАССА за 28.02.2014</h3>
                <h4>Отчет кассира</h4>
                <p>Лист 1</p>
              </Heading>
              <CashBook />
              <Selected />
            </Sheet>
            <Scroll $vertical>
              <button aria-label="Вверх">▲</button>
              <Thumb $vertical $size="45%" />
              <Track />
              <button aria-label="Вниз">▼</button>
            </Scroll>
            <Scroll>
              <button aria-label="Влево">◀</button>
              <Thumb $size="90%" />
              <Track />
              <button aria-label="Вправо">▶</button>
            </Scroll>
            <Corner />
          </SheetFrame>
        </ReportWindow>

        <MessagesButton>
          <Icon name="messages" />
          Служебные сообщения
        </MessagesButton>
        <WindowTabs>
          <WindowTab>
            <Icon name="journal" />
            Акты переоценки
          </WindowTab>
          <WindowTab>
            <Icon name="exchange" />
            Универсальный обмен дан...
          </WindowTab>
          <WindowTab $active>
            <Icon name="report" />
            Кассовая книга за период
          </WindowTab>
        </WindowTabs>
        <StatusBar>
          <span>Для получения подсказки нажмите F1</span>
          <span>CAP</span>
          <span>NUM</span>
        </StatusBar>
      </Frame>

      <Taskbar>
        <Start>
          <Icon name="flag" size={18} />
          пуск
        </Start>
        <QuickLaunch>
          {quick.map((name) => (
            <button key={name} aria-label={name}>
              <Icon name={name} />
            </button>
          ))}
          <button>»</button>
        </QuickLaunch>
        <Tasks>
          {tasks.map(([icon, text, active], i) => (
            <Task key={i} $active={active} aria-label={text || "Chrome"}>
              <Icon name={icon} />
              {text}
            </Task>
          ))}
        </Tasks>
        <Ink x={454} y={-3} w={132} h={36} max={0.85} gain={1.6} seed={13} />
        <Lang>RU</Lang>
        <Tray>
          <TrayArrow aria-label="Показать значки">
            <svg width="8" height="10">
              <path d="M6 1L2 5l4 4" fill="none" stroke="#fff" strokeWidth="2" />
            </svg>
          </TrayArrow>
          <Icon name="avira" />
          <Icon name="network" />
          <Icon name="agentOff" />
          <Icon name="guard" />
          <time>22:00</time>
        </Tray>
      </Taskbar>
    </Desktop>
  );
}
